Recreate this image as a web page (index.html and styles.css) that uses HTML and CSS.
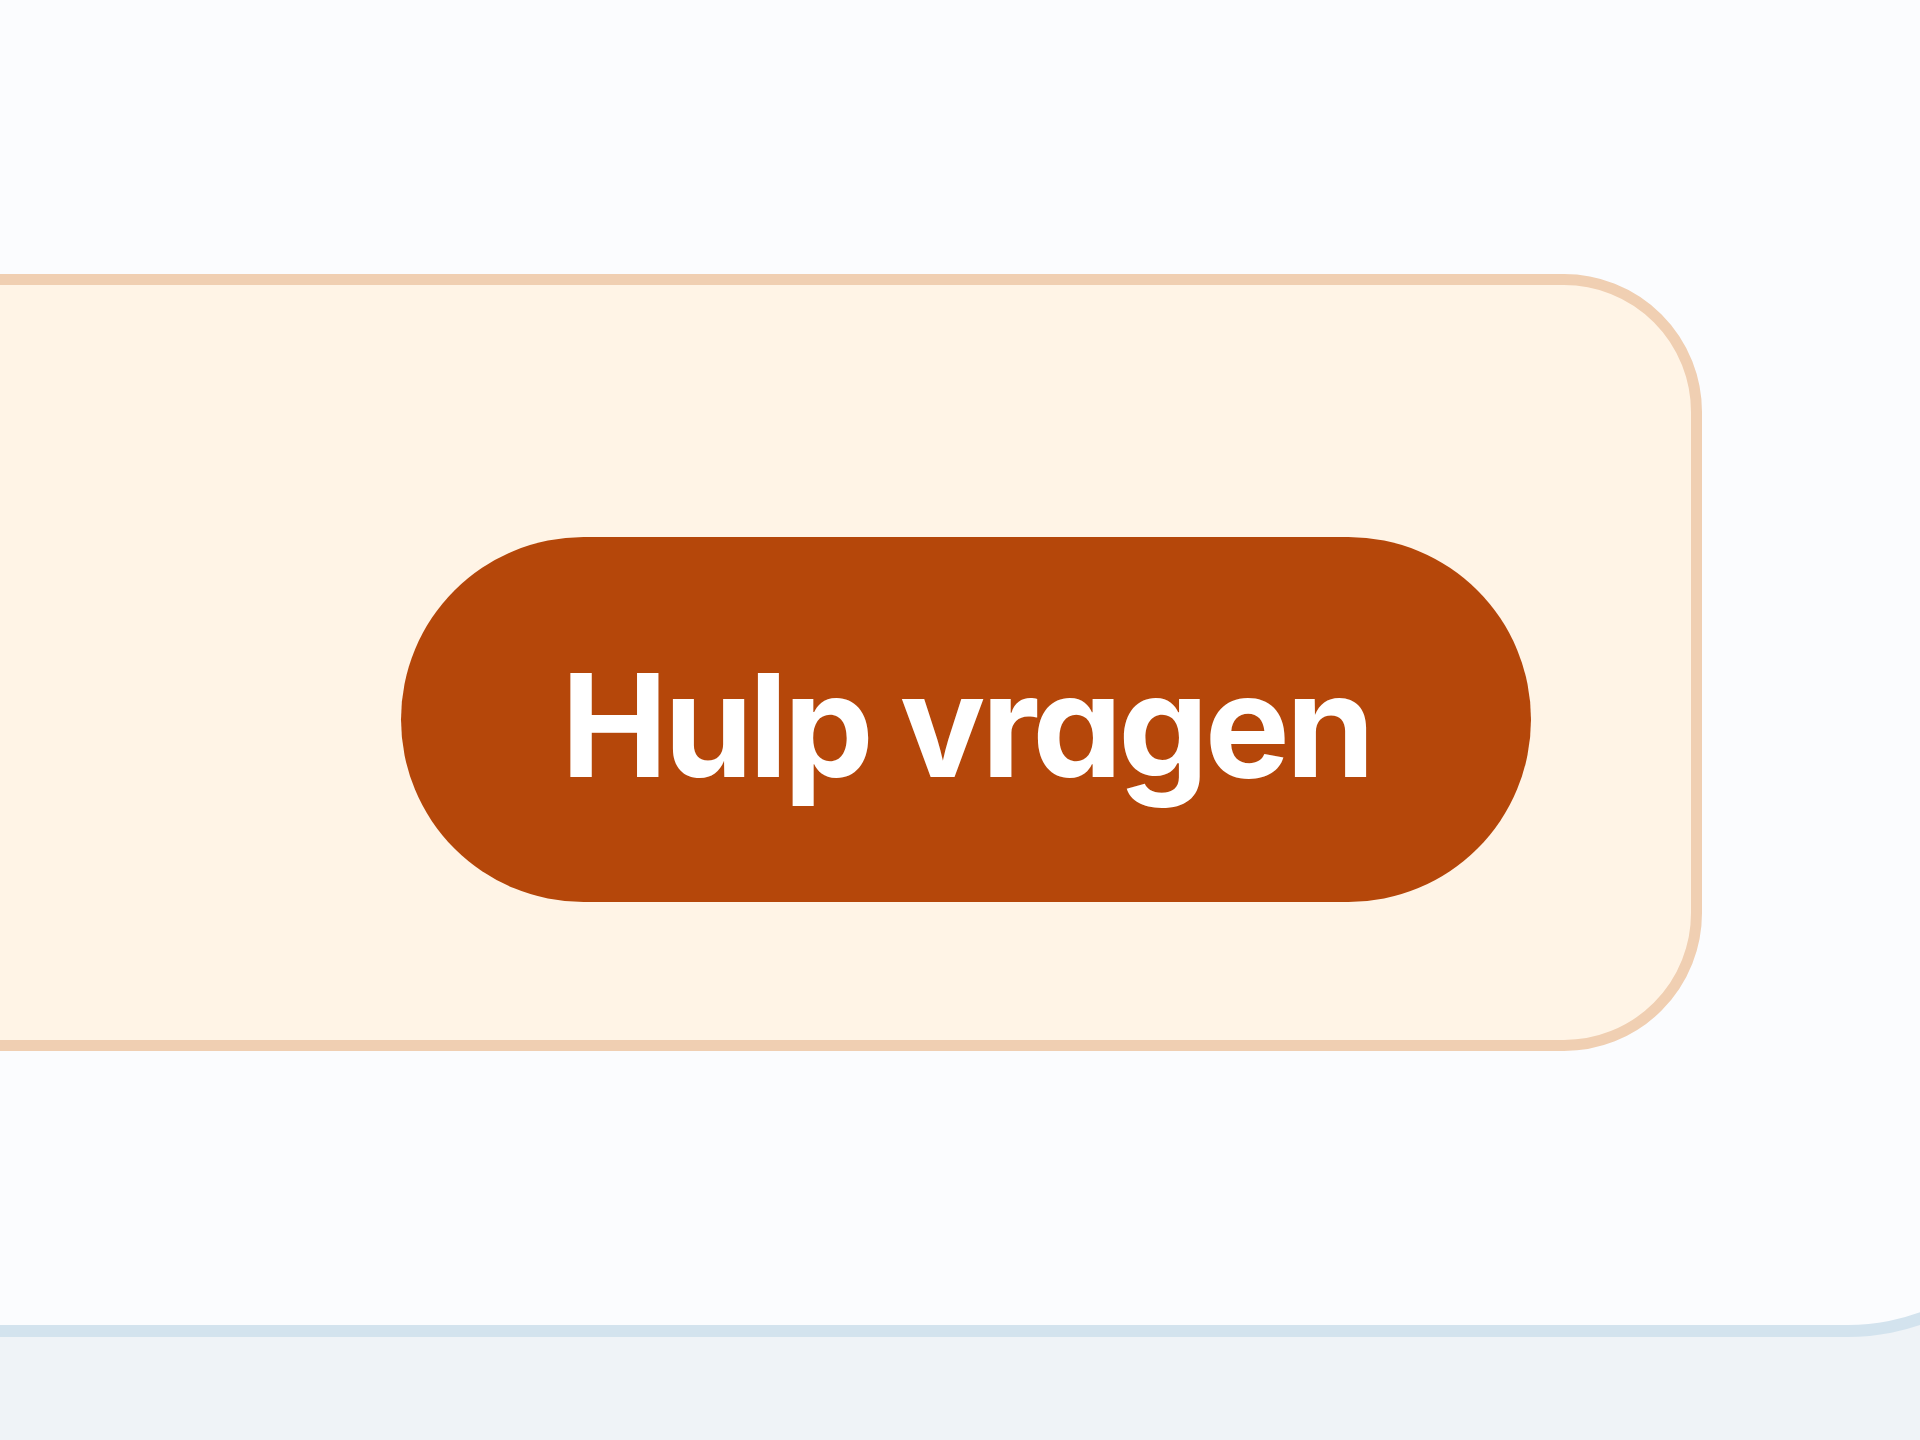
FILE: index.html
```html
<!DOCTYPE html>
<html lang="nl">
<head>
<meta charset="utf-8">
<title>Hulp vragen</title>
<link rel="stylesheet" href="styles.css">
</head>
<body>
  <div class="shell">
    <section class="help-card">
      <button class="help-button" type="button">Hulp vragen</button>
    </section>
  </div>
</body>
</html>
```
FILE: styles.css
```css
html, body {
  margin: 0;
  padding: 0;
}
body {
  background: #eff3f7;
  width: 1920px;
  height: 1440px;
  overflow: hidden;
  font-family: Inter, "Noto Sans", sans-serif;
}
.shell {
  box-sizing: border-box;
  width: 2070px;
  background: #fbfcfe;
  border: 12px solid #d3e3ee;
  border-top-width: 0;
  border-left-width: 0;
  border-bottom-right-radius: 222px;
  padding: 274px 356px 274px 0;
}
.help-card {
  box-sizing: border-box;
  margin-left: -40px;
  height: 777px;
  background: #fff4e6;
  border: 11px solid #f0cfb2;
  border-radius: 0 138px 138px 0;
  display: flex;
  justify-content: flex-end;
  align-items: flex-start;
  padding: 252px 160px 0 0;
}
.help-button {
  box-sizing: border-box;
  width: 1130px;
  height: 365px;
  border: 0;
  border-radius: 999px;
  background: #b5470a;
  color: #ffffff;
  font-family: Inter, "Noto Sans", sans-serif;
  font-weight: 700;
  font-size: 143px;
  font-feature-settings: "cv11" 1;
  letter-spacing: -4px;
  padding: 10px 0 0 0;
  display: flex;
  align-items: center;
  justify-content: center;
  line-height: 1;
}
```
